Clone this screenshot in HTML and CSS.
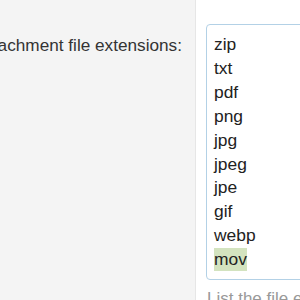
FILE: index.html
```html
<!DOCTYPE html>
<html>
<head>
    <title>Attachment Settings</title>
    <link rel="stylesheet" href="styles.css">
</head>
<body>

<div class="row">
    <div class="label-cell">
        <label for="extensions">Allowed attachment file extensions:</label>
    </div>
    <div class="field-cell">
        <div class="textarea" id="extensions">
            <div>zip</div>
            <div>txt</div>
            <div>pdf</div>
            <div>png</div>
            <div>jpg</div>
            <div>jpeg</div>
            <div>jpe</div>
            <div>gif</div>
            <div>webp</div>
            <div><span class="match">mov</span></div>
        </div>
        <p class="hint">List the file extensions that are allowed for attachments.</p>
    </div>
</div>

</body>
</html>
```

FILE: styles.css
```css
body {
    font-family: "Liberation Sans", Arial, sans-serif;
    background-color: #fff;
    margin: 0;
    padding: 0;
    overflow: hidden;
}

.row {
    display: flex;
    height: 300px;
}

.label-cell {
    flex: 0 0 196px;
    width: 196px;
    min-width: 0;
    overflow: hidden;
    display: flex;
    justify-content: flex-end;
    background-color: #f4f4f4;
    border-right: 1px solid #e6e6e6;
    padding: 33px 13px 0 0;
    box-sizing: border-box;
    white-space: nowrap;
}

label {
    flex-shrink: 0;
    font-size: 17.2px;
    line-height: 24px;
    color: #333;
}

.field-cell {
    flex: 1;
    padding: 24px 0 0 10px;
    min-width: 0;
    overflow: hidden;
}

.textarea {
    width: 140px;
    border: 1px solid #b3d1e6;
    border-radius: 4px;
    padding: 8px 7px 7px;
    font-size: 17.4px;
    line-height: 23.9px;
    color: #222;
    white-space: nowrap;
}

.match {
    display: inline-block;
    line-height: 23px;
    background-color: #d3e3bf;
}

.hint {
    margin: 7px 0 0 1px;
    font-size: 17px;
    line-height: 24px;
    color: #999;
    white-space: nowrap;
}
```
